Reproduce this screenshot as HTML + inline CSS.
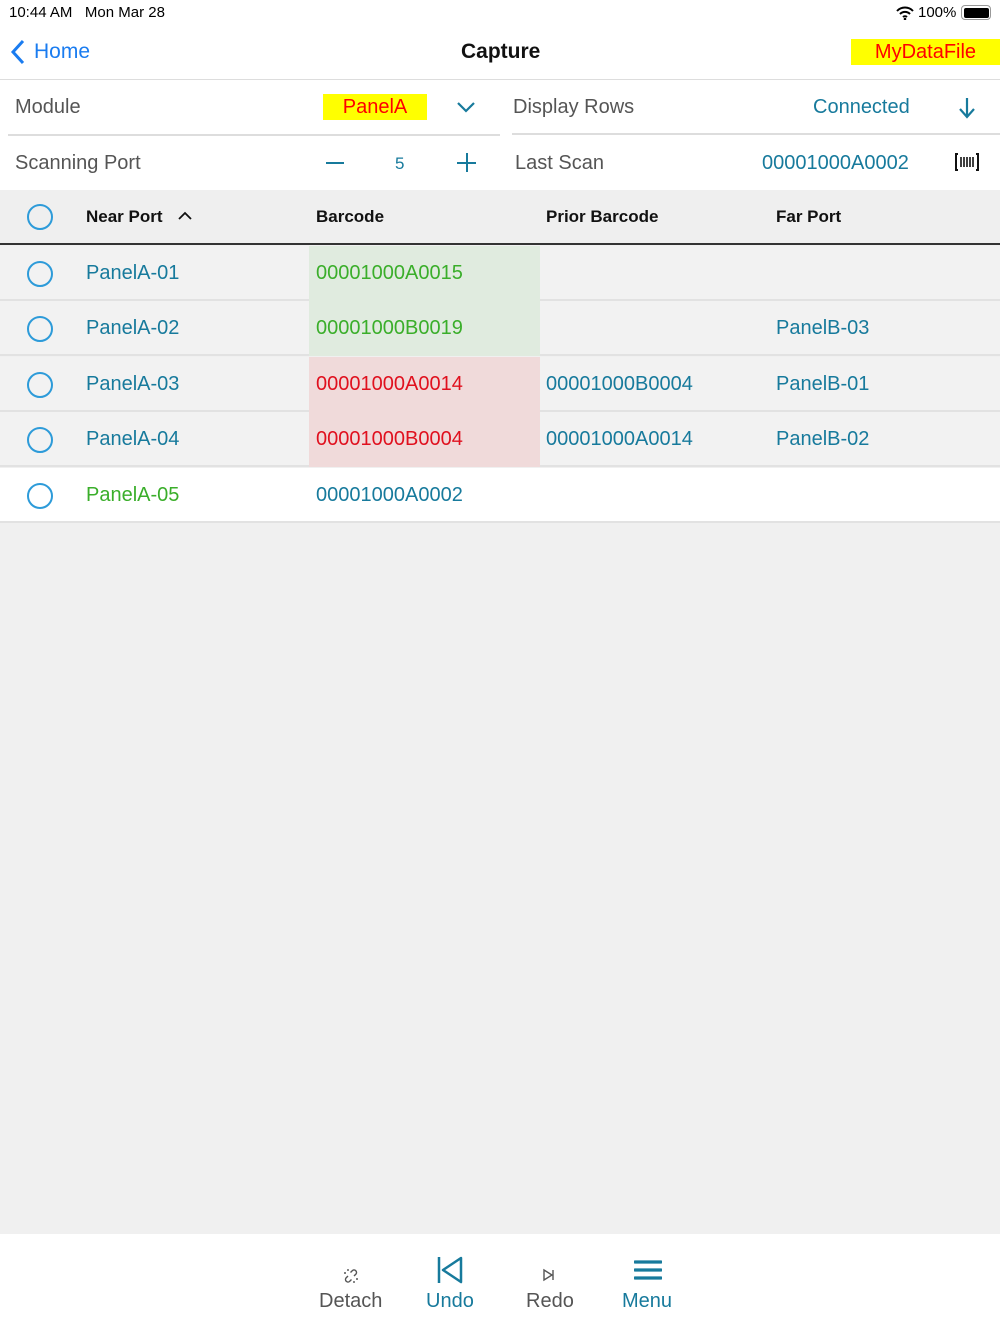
<!DOCTYPE html>
<html><head><meta charset="utf-8"><style>
*{margin:0;padding:0;box-sizing:border-box}
body{width:1000px;height:1334px;background:#f0f0f0;font-family:"Liberation Sans",sans-serif;position:relative;overflow:hidden}
.a{position:absolute;white-space:nowrap}
.teal{color:#177a9c}
.gray{color:#555}
.row{position:absolute;left:0;width:1000px;height:55px;background:#f2f2f2;border-bottom:2px solid #e2e2e2}
.circ{position:absolute;left:27px;width:26px;height:26px;border:2px solid #2d9bd9;border-radius:50%}
.f20{font-size:20px}
</style></head><body>
<div class="a" style="left:0;top:0;width:1000px;height:190px;background:#fff"></div>
<div class="a" style="left:9px;top:4px;font-size:15px;color:#000">10:44 AM&nbsp;&nbsp;&nbsp;Mon Mar 28</div>
<svg class="a" style="left:895px;top:6px" width="20" height="14" viewBox="0 0 20 14"><path d="M2 5a11 11 0 0 1 16 0M5 8a7 7 0 0 1 10 0M8 11a3 3 0 0 1 4 0" stroke="#000" stroke-width="2" fill="none"/><circle cx="10" cy="13" r="1.3"/></svg>
<div class="a" style="left:918px;top:4px;font-size:15px">100%</div>
<div class="a" style="left:961px;top:5px;width:30px;height:15px;border:1.5px solid #999;border-radius:4px;padding:1.5px"><div style="width:100%;height:100%;background:#000;border-radius:2px"></div></div>
<svg class="a" style="left:10px;top:39px" width="16" height="26"><path d="M13 2 3 13l10 11" stroke="#1a7cf0" stroke-width="3" fill="none"/></svg>
<div class="a" style="left:34px;top:40px;font-size:21px;color:#1a7cf0">Home</div>
<div class="a" style="left:461px;top:40px;font-size:21px;font-weight:bold;color:#111">Capture</div>
<div class="a" style="left:851px;top:39px;width:149px;height:26px;background:#ffff00;color:#f00;font-size:20px;text-align:center;line-height:26px">MyDataFile</div>
<div class="a" style="left:0;top:79px;width:1000px;height:1px;background:#ddd"></div>
<div class="a gray f20" style="left:15px;top:96px">Module</div>
<div class="a" style="left:323px;top:94px;width:104px;height:26px;background:#ffff00;color:#f00;font-size:20px;text-align:center;line-height:26px">PanelA</div>
<svg class="a" style="left:456px;top:100px" width="20" height="14"><path d="M2 3l8 8 8-8" stroke="#177a9c" stroke-width="2.2" fill="none"/></svg>
<div class="a gray f20" style="left:513px;top:96px">Display Rows</div>
<div class="a teal f20" style="left:813px;top:96px">Connected</div>
<svg class="a" style="left:957px;top:96px" width="20" height="24"><path d="M10 2v19M3 13l7 8 7-8" stroke="#177a9c" stroke-width="2.2" fill="none"/></svg>
<div class="a" style="left:8px;top:134px;width:492px;height:2px;background:#ddd"></div>
<div class="a" style="left:512px;top:133px;width:488px;height:2px;background:#ddd"></div>
<div class="a gray f20" style="left:15px;top:152px">Scanning Port</div>
<div class="a" style="left:326px;top:162px;width:18px;height:2px;background:#177a9c"></div>
<div class="a teal" style="left:395px;top:154px;font-size:17px">5</div>
<div class="a" style="left:457px;top:162px;width:19px;height:2px;background:#177a9c"></div>
<div class="a" style="left:466px;top:153px;width:2px;height:19px;background:#177a9c"></div>
<div class="a gray f20" style="left:515px;top:152px">Last Scan</div>
<div class="a teal f20" style="left:762px;top:152px">00001000A0002</div>
<svg class="a" style="left:954px;top:152px" width="26" height="20"><path d="M4 2H2v16h2M22 2h2v16h-2" stroke="#111" stroke-width="2" fill="none"/><path d="M7 5v10M10 5v10M13 5v10M16 5v10M19 5v10" stroke="#111" stroke-width="1.6"/></svg>
<div class="a" style="left:0;top:190px;width:1000px;height:55px;background:#efefef;border-bottom:2px solid #333"></div>
<div class="circ" style="top:204px"></div>
<div class="a" style="left:86px;top:207px;font-size:17px;font-weight:bold;color:#111">Near Port</div>
<svg class="a" style="left:177px;top:210px" width="16" height="12"><path d="M2 9l6-6 6 6" stroke="#111" stroke-width="1.8" fill="none"/></svg>
<div class="a" style="left:316px;top:207px;font-size:17px;font-weight:bold;color:#111">Barcode</div>
<div class="a" style="left:546px;top:207px;font-size:17px;font-weight:bold;color:#111">Prior Barcode</div>
<div class="a" style="left:776px;top:207px;font-size:17px;font-weight:bold;color:#111">Far Port</div>

<div class="row" style="top:246px"><div class="a" style="left:309px;top:0;width:231px;height:55px;background:#e0ebdf"></div><div class="circ" style="top:15px"></div><div class="a teal f20" style="left:86px;top:16px">PanelA-01</div><div class="a f20" style="left:316px;top:16px;color:#3aae2a">00001000A0015</div></div>
<div class="row" style="top:301px"><div class="a" style="left:309px;top:0;width:231px;height:55px;background:#e0ebdf"></div><div class="circ" style="top:15px"></div><div class="a teal f20" style="left:86px;top:16px">PanelA-02</div><div class="a f20" style="left:316px;top:16px;color:#3aae2a">00001000B0019</div><div class="a teal f20" style="left:776px;top:16px">PanelB-03</div></div>
<div class="row" style="top:357px"><div class="a" style="left:309px;top:0;width:231px;height:55px;background:#f0dada"></div><div class="circ" style="top:15px"></div><div class="a teal f20" style="left:86px;top:16px">PanelA-03</div><div class="a f20" style="left:316px;top:16px;color:#e0101e">00001000A0014</div><div class="a teal f20" style="left:546px;top:16px">00001000B0004</div><div class="a teal f20" style="left:776px;top:16px">PanelB-01</div></div>
<div class="row" style="top:412px"><div class="a" style="left:309px;top:0;width:231px;height:55px;background:#f0dada"></div><div class="circ" style="top:15px"></div><div class="a teal f20" style="left:86px;top:16px">PanelA-04</div><div class="a f20" style="left:316px;top:16px;color:#e0101e">00001000B0004</div><div class="a teal f20" style="left:546px;top:16px">00001000A0014</div><div class="a teal f20" style="left:776px;top:16px">PanelB-02</div></div>
<div class="row" style="top:468px;background:#fff"><div class="circ" style="top:15px"></div><div class="a f20" style="left:86px;top:16px;color:#3aae2a">PanelA-05</div><div class="a teal f20" style="left:316px;top:16px">00001000A0002</div></div>

<div class="a" style="left:0;top:1234px;width:1000px;height:100px;background:#fff"></div>
<svg class="a" style="left:342px;top:1267px" width="18" height="18"><path d="M6 9l-2 2a2.5 2.5 0 0 0 3.5 3.5l2-2M12 9l2-2a2.5 2.5 0 0 0-3.5-3.5l-2 2M2 6h2M6 2v2M16 12h-2M12 16v-2" stroke="#555" stroke-width="1.4" fill="none"/></svg>
<div class="a f20" style="left:319px;top:1290px;color:#555">Detach</div>
<svg class="a" style="left:436px;top:1255px" width="28" height="30"><path d="M3 2v26M25 3L7 15l18 12z" stroke="#177a9c" stroke-width="2.5" fill="none" stroke-linejoin="round"/></svg>
<div class="a teal f20" style="left:426px;top:1290px">Undo</div>
<svg class="a" style="left:542px;top:1268px" width="14" height="14"><path d="M2 2l8 5-8 5zM11 2v10" stroke="#555" stroke-width="1.4" fill="none"/></svg>
<div class="a f20" style="left:526px;top:1290px;color:#555">Redo</div>
<svg class="a" style="left:634px;top:1260px" width="28" height="22"><path d="M1 2h26M1 10h26M1 18h26" stroke="#177a9c" stroke-width="3.2" stroke-linecap="round"/></svg>
<div class="a teal f20" style="left:622px;top:1290px">Menu</div>
</body></html>
